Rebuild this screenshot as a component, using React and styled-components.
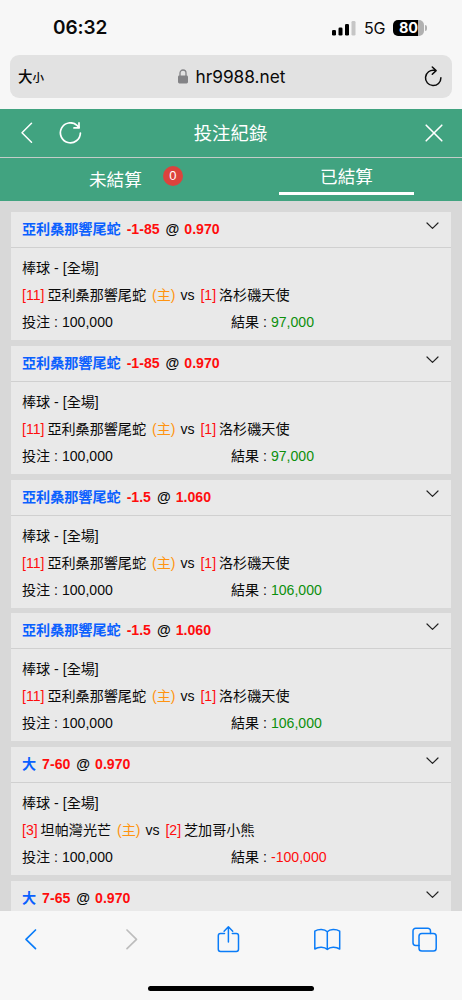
import React from 'react';
import styled, { createGlobalStyle } from 'styled-components';

const colors = {
  green: '#41a380',
  chrome: '#f7f7f7',
  page: '#d8d8d8',
  card: '#e9e9e9',
  link: '#0a7cf8',
  team: '#0a60ff',
  odds: '#ff0d0d',
  win: '#0c8f0c',
  home: '#ff9410',
};

const GlobalStyle = createGlobalStyle`
  * {
    box-sizing: border-box;
  }

  body {
    margin: 0;
    background: ${colors.chrome};
    color: #0a0a0a;
    font-family: 'Liberation Sans', 'Noto Sans CJK TC', sans-serif;
  }
`;

const Screen = styled.div`
  display: flex;
  flex-direction: column;
  height: 1000px;
  overflow: hidden;
  width: 462px;
`;

const StatusBar = styled.div`
  align-items: center;
  display: flex;
  flex: none;
  height: 55px;
  justify-content: space-between;
  padding: 0 35px 0 53px;
`;

const Clock = styled.span`
  font-family: Inter, sans-serif;
  font-size: 19px;
  font-weight: 600;
  letter-spacing: -0.1px;
  line-height: 20px;
`;

const StatusIcons = styled.div`
  align-items: center;
  display: flex;
`;

const Network = styled.span`
  font-family: Inter, sans-serif;
  font-size: 16px;
  letter-spacing: -0.3px;
  line-height: 20px;
  margin: 1px 8px 0 8px;
  width: 21px;
`;

const Battery = styled.div`
  background: linear-gradient(to right, #000 25px, #b1b1b1 25px);
  border-radius: 5px;
  color: #fff;
  font-family: Inter, sans-serif;
  font-size: 14.5px;
  font-weight: 700;
  height: 16px;
  letter-spacing: -0.3px;
  line-height: 16px;
  padding-left: 6px;
  width: 31px;
`;

const BatteryTip = styled.div`
  background: #b1b1b1;
  border-radius: 0 3px 3px 0;
  height: 6px;
  margin-left: 1px;
  width: 2px;
`;

const AddressBar = styled.div`
  align-items: center;
  background: #e2e2e2;
  border-radius: 9px;
  display: grid;
  flex: none;
  grid-template-columns: 100px 1fr 100px;
  height: 43px;
  margin: 0 10px 11px;
  padding: 0 10px 0 8px;
`;

const TextSize = styled.span`
  font-family: 'Noto Sans CJK TC', sans-serif;
  font-size: 14.5px;
  font-weight: 500;
  line-height: 20px;
  white-space: nowrap;

  small {
    font-size: 11.5px;
  }
`;

const Host = styled.div`
  align-items: center;
  display: flex;
  font-family: Inter, sans-serif;
  font-size: 17.3px;
  gap: 7px;
  justify-content: center;
  line-height: 22px;
  padding-left: 4px;
`;

const ReloadSlot = styled.div`
  display: flex;
  justify-content: flex-end;
`;

const Header = styled.header`
  align-items: center;
  background: ${colors.green};
  border-bottom: 1px solid #c3cdc9;
  color: #fff;
  display: grid;
  flex: none;
  grid-template-columns: 100px 1fr 100px;
  height: 49px;
  padding: 0 19px 0 20px;
`;

const HeaderActions = styled.div`
  align-items: center;
  display: flex;
  gap: 25px;
  justify-content: ${props => (props.$end ? 'flex-end' : 'flex-start')};
`;

const Title = styled.h1`
  font-size: 18.4px;
  font-weight: 400;
  line-height: 24px;
  margin: 2px 2px 0 0;
  text-align: center;
`;

const Tabs = styled.nav`
  background: ${colors.green};
  color: #fff;
  display: grid;
  flex: none;
  grid-template-columns: 1fr 1fr;
  height: 43px;
`;

const Tab = styled.div`
  align-items: center;
  display: flex;
  font-size: 17.6px;
  height: 43px;
  line-height: 24px;
  padding-left: 89px;
`;

const ActiveTab = styled.div`
  border-bottom: 3px solid #fff;
  font-size: 17.6px;
  height: 37px;
  line-height: 38px;
  margin: 0 auto;
  text-align: center;
  width: 135px;
`;

const Badge = styled.span`
  background: #dc433d;
  border-radius: 50%;
  font-size: 13px;
  height: 20px;
  line-height: 20px;
  margin: -7px 0 0 21px;
  text-align: center;
  width: 20px;
`;

const List = styled.main`
  background: ${colors.page};
  display: flex;
  flex: 1;
  flex-direction: column;
  gap: 5.8px;
  min-height: 0;
  overflow: hidden;
  padding: 11px 11px 0;
`;

const Card = styled.article`
  background: ${colors.card};
  flex: none;
  font-size: 14.1px;
  height: 128px;
`;

const CardTop = styled.div`
  border-bottom: 1px solid #d0d0d0;
  display: flex;
  font-weight: 700;
  height: 36px;
  justify-content: space-between;
  line-height: 35px;
  padding: 0 11px;

  svg {
    margin-top: 9px;
  }
`;

const Pick = styled.span`
  color: ${colors.team};
  margin-right: 6px;
`;

const Odds = styled.span`
  color: ${colors.odds};
`;

const At = styled.span`
  margin: 0 5px 0 6px;
`;

const CardBody = styled.div`
  line-height: 27px;
  padding: 7px 11px 0;
`;

const Line = styled.div`
  height: 27px;
  white-space: nowrap;
`;

const Split = styled(Line)`
  display: grid;
  grid-template-columns: 1fr 1fr;
`;

const Pitcher = styled.span`
  color: ${colors.odds};
  margin: 0 -1px 0 ${props => (props.$away ? '2px' : '0')};
`;

const Home = styled.span`
  color: ${colors.home};
  margin: 0 1px 0 2px;
`;

const Result = styled.span`
  color: ${props => (props.$lost ? colors.odds : colors.win)};
`;

const Toolbar = styled.footer`
  background: ${colors.chrome};
  display: flex;
  flex: none;
  flex-direction: column;
  height: 89px;
  justify-content: space-between;
  padding: 13px 23px 9px 17px;
`;

const ToolbarIcons = styled.div`
  display: flex;
  justify-content: space-between;
`;

const HomeIndicator = styled.div`
  background: #000;
  border-radius: 3px;
  height: 5px;
  margin-left: 131px;
  width: 166px;
`;

const bets = [
  { pick: '亞利桑那響尾蛇', line: '-1-85', odds: '0.970', home: [11, '亞利桑那響尾蛇'], away: [1, '洛杉磯天使'], result: '97,000' },
  { pick: '亞利桑那響尾蛇', line: '-1-85', odds: '0.970', home: [11, '亞利桑那響尾蛇'], away: [1, '洛杉磯天使'], result: '97,000' },
  { pick: '亞利桑那響尾蛇', line: '-1.5', odds: '1.060', home: [11, '亞利桑那響尾蛇'], away: [1, '洛杉磯天使'], result: '106,000' },
  { pick: '亞利桑那響尾蛇', line: '-1.5', odds: '1.060', home: [11, '亞利桑那響尾蛇'], away: [1, '洛杉磯天使'], result: '106,000' },
  { pick: '大', line: '7-60', odds: '0.970', home: [3, '坦帕灣光芒'], away: [2, '芝加哥小熊'], result: '-100,000' },
  { pick: '大', line: '7-65', odds: '0.970' },
];

const Icon = ({ w, h, stroke = 'currentColor', width = 1.7, children }) => (
  <svg
    width={w}
    height={h}
    viewBox={`0 0 ${w} ${h}`}
    fill="none"
    stroke={stroke}
    strokeWidth={width}
    strokeLinecap="round"
    strokeLinejoin="round"
  >
    {children}
  </svg>
);

const Signal = () => (
  <svg width="24" height="16" viewBox="0 0 24 16">
    <rect x="0" y="10" width="4" height="5.500" rx="1.300" />
    <rect x="6.500" y="7.500" width="4" height="8" rx="1.300" />
    <rect x="13" y="4" width="4" height="11.500" rx="1.300" />
    <rect x="19.500" y="1" width="4" height="14.500" rx="1.300" fill="#c6c6c6" />
  </svg>
);

const Lock = () => (
  <svg width="10" height="15" viewBox="0 0 10 15">
    <path d="M2 7V4a3 3 0 0 1 6 0v3" fill="none" stroke="#838386" strokeWidth="1.3" />
    <rect x="0" y="6.5" width="10" height="8" rx="1.4" fill="#838386" />
  </svg>
);

const Bet = ({ bet }) => (
  <Card>
    <CardTop>
      <div>
        <Pick>{bet.pick}</Pick>
        <Odds>{bet.line}</Odds>
        <At>@</At>
        <Odds>{bet.odds}</Odds>
      </div>
      <Icon w={15} h={10} stroke="#222" width={1.2}>
        <path d="M2 2l5.5 5.400L13 2" />
      </Icon>
    </CardTop>
    {bet.home && (
      <CardBody>
        <Line>棒球 - [全場]</Line>
        <Line>
          <Pitcher>[{bet.home[0]}]</Pitcher> {bet.home[1]} <Home>(主)</Home> vs{' '}
          <Pitcher $away>[{bet.away[0]}]</Pitcher> {bet.away[1]}
        </Line>
        <Split>
          <span>投注 : 100,000</span>
          <span>
            結果 : <Result $lost={bet.result.startsWith('-')}>{bet.result}</Result>
          </span>
        </Split>
      </CardBody>
    )}
  </Card>
);

const App = () => {
  return (
    <Screen>
      <GlobalStyle />
      <StatusBar>
        <Clock>06:32</Clock>
        <StatusIcons>
          <Signal />
          <Network>5G</Network>
          <Battery>80</Battery>
          <BatteryTip />
        </StatusIcons>
      </StatusBar>
      <AddressBar>
        <TextSize>
          大<small>小</small>
        </TextSize>
        <Host>
          <Lock />
          hr9988.net
        </Host>
        <ReloadSlot>
          <Icon w={18} h={22} width={1.5}>
            <path d="M10.500 4.300A7.700 7.700 0 1 0 16.900 11.800" />
            <path d="M8.300 1l3.800 3.600L8.300 8.300" />
          </Icon>
        </ReloadSlot>
      </AddressBar>
      <Header>
        <HeaderActions>
          <Icon w={14} h={22} width={1.5}>
            <path d="M11.500 1.200L2 10.700l9.500 9.500" />
          </Icon>
          <Icon w={24} h={22} width={1.7}>
            <path d="M21.400 11A10 10 0 1 1 18 3.300L20 5.300" />
            <path d="M20 .9v5h-5" />
          </Icon>
        </HeaderActions>
        <Title>投注紀錄</Title>
        <HeaderActions $end>
          <Icon w={18} h={18} width={1.6}>
            <path d="M1.200 1.200l15.600 15.600M16.800 1.200L1.200 16.800" />
          </Icon>
        </HeaderActions>
      </Header>
      <Tabs>
        <Tab>
          未結算<Badge>0</Badge>
        </Tab>
        <ActiveTab>已結算</ActiveTab>
      </Tabs>
      <List>
        {bets.map((bet, i) => (
          <Bet key={i} bet={bet} />
        ))}
      </List>
      <Toolbar>
        <ToolbarIcons>
          <Icon w={28} h={30} stroke={colors.link}>
            <path d="M18.500 6L9 15.300l9.500 9.300" />
          </Icon>
          <Icon w={28} h={30} stroke="#bdbdbd">
            <path d="M11 6l9.500 9.300L11 24.600" />
          </Icon>
          <Icon w={28} h={30} stroke={colors.link} width={1.5}>
            <path d="M10.500 9.500H6.500A2.200 2.200 0 0 0 4.300 11.700V25.200A2.200 2.200 0 0 0 6.500 27.400H22.300A2.200 2.200 0 0 0 24.500 25.200V11.700A2.200 2.200 0 0 0 22.300 9.500H18.300" />
            <path d="M14.400 18V3M10.100 7.200L14.400 2.800l4.300 4.400" />
          </Icon>
          <Icon w={28} h={30} stroke={colors.link} width={1.5}>
            <path d="M14.300 7.700C11.500 5 5.500 5 1.800 7.200V25C5.500 22.700 11.500 22.700 14.300 25.500 17 22.700 23 22.700 26.700 25V7.200C23 5 17 5 14.300 7.700V25.500" />
          </Icon>
          <Icon w={28} h={30} stroke={colors.link} width={1.5}>
            <rect x="8" y="9.500" width="17.200" height="17.500" rx="2.800" />
            <path d="M8 21.500H4.700A2.700 2.700 0 0 1 2 18.800V7A2.700 2.700 0 0 1 4.700 4.300H16.800A2.700 2.700 0 0 1 19.500 7V9.500" />
          </Icon>
        </ToolbarIcons>
        <HomeIndicator />
      </Toolbar>
    </Screen>
  );
};

export default App;
